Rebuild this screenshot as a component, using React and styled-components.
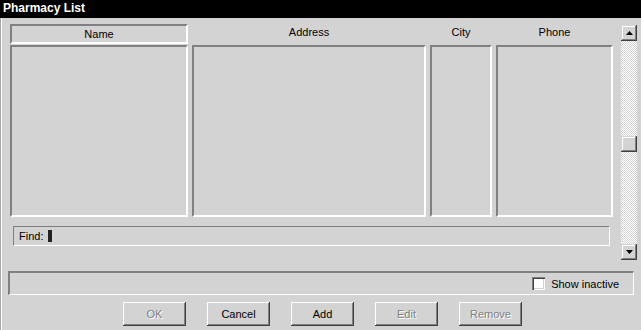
import React from "react"
import styled, { createGlobalStyle } from "styled-components"

const FACE = "#d3d3d3"
const SHADOW = "#808080"
const DARK = "#404040"

const GlobalStyle = createGlobalStyle`
  body {
    margin: 0;
    font-family: "Liberation Sans", Arial, sans-serif;
    font-size: 11px;
    color: #000;
  }
  * { box-sizing: border-box; }
`

const Window = styled.div`
  width: 641px;
  height: 330px;
  background: ${FACE};
  display: flex;
  flex-direction: column;
  overflow: hidden;
`

const TitleBar = styled.header`
  height: 18px;
  flex: none;
  background: #000;
  color: #fff;
  font-weight: bold;
  font-size: 12px;
  line-height: 16px;
  padding-left: 3px;
`

const Body = styled.div`
  flex: 1;
  display: flex;
  flex-direction: column;
  padding: 6px 4px 0 7px;
  border-left: 1px solid #a9a9a9;
  box-shadow: inset 1px 0 #fff;
`

const MainRow = styled.div`
  display: flex;
  gap: 8px;
  height: 236px;
  padding-left: 2px;
`

const TablePane = styled.div`
  width: 603px;
  display: flex;
  flex-direction: column;
`

const HeaderRow = styled.div`
  display: flex;
  gap: 4px;
  height: 21px;
`

const HeaderCell = styled.div`
  width: ${(p) => p.$width}px;
  height: 20px;
  text-align: center;
  line-height: ${(p) => (p.$boxed ? "16px" : "13px")};
  padding-top: ${(p) => (p.$boxed ? 0 : 2)}px;
  border: ${(p) => (p.$boxed ? "2px solid" : "none")};
  border-color: ${SHADOW} #fff #fff ${SHADOW};
`

const ColumnsRow = styled.div`
  display: flex;
  gap: 4px;
  height: 172px;
`

const Column = styled.div`
  width: ${(p) => p.$width}px;
  height: 100%;
  border: 2px solid;
  border-color: ${SHADOW} #fff #fff ${SHADOW};
`

const FindBox = styled.div`
  margin: 9px 0 0 3px;
  width: 597px;
  height: 20px;
  border: 1px solid;
  border-color: ${SHADOW} #fff #fff ${SHADOW};
  display: flex;
  align-items: center;
  padding-left: 5px;
  gap: 5px;
`

const Caret = styled.span`
  width: 4px;
  height: 12px;
  background: #222;
`

const Scrollbar = styled.div`
  width: 16px;
  margin-top: 1px;
  display: flex;
  flex-direction: column;
`

const ScrollButton = styled.div`
  width: 16px;
  height: 16px;
  flex: none;
  background: ${FACE};
  display: flex;
  align-items: center;
  justify-content: center;
  box-shadow: inset -1px -1px ${DARK}, inset 1px 1px ${FACE},
    inset -2px -2px ${SHADOW}, inset 2px 2px #fff;
`

const Track = styled.div`
  flex: 1;
  background: repeating-conic-gradient(#fff 0% 25%, ${FACE} 0% 50%) 0 0 / 2px 2px;
`

const Thumb = styled(ScrollButton)`
  margin-top: ${(p) => p.$offset}px;
`

const BottomBar = styled.div`
  margin-top: 11px;
  width: 626px;
  height: 24px;
  border-style: solid;
  border-width: 2px 1px 1px 2px;
  border-color: ${SHADOW} #fff #fff ${SHADOW};
  display: flex;
  justify-content: flex-end;
  align-items: center;
  padding-right: 14px;
  gap: 6px;
`

const CheckBox = styled.span`
  width: 13px;
  height: 13px;
  background: #fff;
  box-shadow: inset 1px 1px ${SHADOW}, inset 2px 2px ${DARK},
    inset -1px -1px #fff, inset -2px -2px ${FACE};
`

const ButtonRow = styled.div`
  display: flex;
  gap: 21px;
  margin-top: 7px;
  padding-left: 115px;
`

const PushButton = styled.button`
  width: 63px;
  height: 24px;
  padding: 0;
  border: none;
  background: ${FACE};
  font: inherit;
  color: ${(p) => (p.disabled ? SHADOW : "#000")};
  text-shadow: ${(p) => (p.disabled ? "1px 1px #fff" : "none")};
  box-shadow: inset -1px -1px ${DARK}, inset 1px 1px #fff,
    inset -2px -2px ${SHADOW};
`

const Arrow = ({ down }) => (
  <svg width="7" height="4" viewBox="0 0 7 4">
    <polygon points={down ? "0,0 7,0 3.5,4" : "0,4 7,4 3.5,0"} fill="#000" />
  </svg>
)

const columns = [
  { label: "Name", width: 178, boxed: true },
  { label: "Address", width: 234 },
  { label: "City", width: 62 },
  { label: "Phone", width: 117 },
]

const buttons = [
  { label: "OK", disabled: true },
  { label: "Cancel" },
  { label: "Add" },
  { label: "Edit", disabled: true },
  { label: "Remove", disabled: true },
]

const App = () => (
  <Window>
    <GlobalStyle />
    <TitleBar>Pharmacy List</TitleBar>
    <Body>
      <MainRow>
        <TablePane>
          <HeaderRow>
            {columns.map((c) => (
              <HeaderCell key={c.label} $width={c.width} $boxed={c.boxed}>
                {c.label}
              </HeaderCell>
            ))}
          </HeaderRow>
          <ColumnsRow>
            {columns.map((c) => (
              <Column key={c.label} $width={c.width} />
            ))}
          </ColumnsRow>
          <FindBox>
            Find:
            <Caret />
          </FindBox>
        </TablePane>
        <Scrollbar>
          <ScrollButton>
            <Arrow />
          </ScrollButton>
          <Track>
            <Thumb $offset={95} />
          </Track>
          <ScrollButton>
            <Arrow down />
          </ScrollButton>
        </Scrollbar>
      </MainRow>
      <BottomBar>
        <CheckBox />
        Show inactive
      </BottomBar>
      <ButtonRow>
        {buttons.map((b) => (
          <PushButton key={b.label} disabled={b.disabled}>
            {b.label}
          </PushButton>
        ))}
      </ButtonRow>
    </Body>
  </Window>
)

export default App
